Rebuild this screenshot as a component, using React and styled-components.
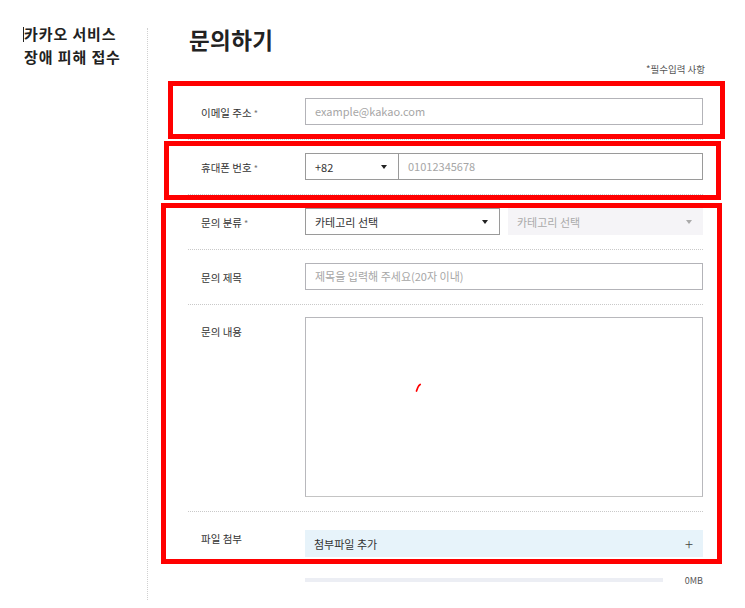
import React from "react";
import styled, { createGlobalStyle } from "styled-components";

const Global = createGlobalStyle`
  html, body { margin: 0; padding: 0; background: #fff; }
  body { font-family: "Noto Sans CJK KR", "Noto Sans", sans-serif; color: #333; }
  * { box-sizing: border-box; }
`;

const Page = styled.div`
  position: relative;
  display: flex;
  width: 745px;
  min-height: 608px;
`;

const Sidebar = styled.aside`
  width: 148px;
  flex: none;
  padding: 0 0 0 24px;
  border-right: 1px dotted #d0d0d0;
  margin-top: 28px;
  margin-bottom: 8px;
`;

const SideTitle = styled.h2`
  margin: -6px 0 0;
  font-size: 15px;
  line-height: 23px;
  font-weight: 700;
  color: #222;
  letter-spacing: 0.9px;
`;

const Caret = styled.span`
  display: inline-block;
  width: 1px;
  height: 15px;
  background: #222;
  vertical-align: -2px;
  margin-left: -1px;
`;

const Main = styled.main`
  width: 517px;
  margin-left: 40px;
  padding-top: 24px;
`;

const Title = styled.h1`
  margin: 0 0 0 1px;
  font-size: 22.5px;
  line-height: 30px;
  font-weight: 700;
  color: #222;
  letter-spacing: 0.4px;
`;

const Note = styled.div`
  margin-top: 8px;
  text-align: right;
  font-size: 9.5px;
  line-height: 14px;
  color: #555;
`;

const Form = styled.div`
  margin-top: 8px;
  width: 515px;
`;

const Row = styled.div`
  display: grid;
  grid-template-columns: 117px 398px;
  align-items: start;
  padding: ${(p) => p.$pad || "13px 0 14px"};
  border-top: 1px dotted #c9c9c9;
`;

const Label = styled.div`
  padding-left: 13px;
  padding-top: ${(p) => (p.$file ? "0" : "2px")};
  height: ${(p) => (p.$file ? "18px" : "27px")};
  font-size: 10.5px;
  line-height: ${(p) => (p.$file ? "18px" : "25px")};
  color: #333;
  white-space: nowrap;
`;

const Req = styled.span`
  color: #777;
  margin-left: 2px;
  font-size: 9px;
  line-height: 0;
`;

const Input = styled.div`
  height: 27px;
  border: 1px solid ${(p) => (p.$dark ? "#9a9a9a" : "#b3b3b8")};
  background: #fff;
  padding-left: 9px;
  font-size: 11px;
  line-height: 25px;
  color: ${(p) => (p.$value ? "#333" : "#a6a6a6")};
  flex: 1;
  white-space: nowrap;
`;

const Pair = styled.div`
  display: flex;
  gap: ${(p) => p.$gap || 0}px;
`;

const Select = styled.div`
  width: ${(p) => p.$w}px;
  flex: none;
  height: 27px;
  display: flex;
  align-items: center;
  justify-content: space-between;
  padding: 0 11px 0 9px;
  font-size: 11px;
  color: ${(p) => (p.$disabled ? "#aaa" : "#333")};
  border: ${(p) => (p.$disabled ? "none" : "1px solid #9a9a9a")};
  border-right: ${(p) => (p.$joined ? "none" : p.$disabled ? "none" : "1px solid #9a9a9a")};
  background: ${(p) => (p.$disabled ? "#f5f4f7" : "#fff")};
`;

const Arrow = styled.span`
  width: 0;
  height: 0;
  border-left: 3px solid transparent;
  border-right: 3px solid transparent;
  border-top: 4px solid ${(p) => (p.$disabled ? "#aaa" : "#222")};
`;

const TextArea = styled.div`
  position: relative;
  height: 180px;
  border: 1px solid #b8b8bc;
  border-bottom-color: #c4c4c4;
  background: #fff;
`;

const Mark = styled.svg`
  position: absolute;
  left: 109px;
  top: 64px;
`;

const FileBox = styled.div`
  height: 27px;
  display: flex;
  align-items: center;
  justify-content: space-between;
  padding: 0 10px 0 9px;
  background: #e7f3fa;
  font-size: 11px;
  color: #333;
`;

const Plus = styled.span`
  font-size: 15px;
  font-weight: 300;
  color: #444;
  line-height: 1;
`;

const SizeRow = styled.div`
  display: grid;
  grid-template-columns: 117px 358px 40px;
  align-items: center;
  margin-top: 16px;
  height: 14px;
`;

const Bar = styled.div`
  grid-column: 2;
  height: 4px;
  background: #eceef4;
`;

const Size = styled.div`
  text-align: right;
  font-size: 9px;
  color: #555;
`;

const RedBox = styled.div`
  position: absolute;
  left: ${(p) => p.$x}px;
  top: ${(p) => p.$y}px;
  width: ${(p) => p.$w}px;
  height: ${(p) => p.$h}px;
  border: 5px solid #ff0000;
  pointer-events: none;
`;

export default function App() {
  return (
    <>
      <Global />
      <Page>
        <Sidebar>
          <SideTitle>
            <Caret />카카오 서비스
            <br />
            장애 피해 접수
          </SideTitle>
        </Sidebar>
        <Main>
          <Title>문의하기</Title>
          <Note>*필수입력 사항</Note>
          <Form>
            <Row>
              <Label>
                이메일 주소<Req>*</Req>
              </Label>
              <Input>example@kakao.com</Input>
            </Row>
            <Row>
              <Label>
                휴대폰 번호<Req>*</Req>
              </Label>
              <Pair>
                <Select $w={93} $joined>
                  +82 <Arrow />
                </Select>
                <Input $dark>01012345678</Input>
              </Pair>
            </Row>
            <Row>
              <Label>
                문의 분류<Req>*</Req>
              </Label>
              <Pair $gap={8}>
                <Select $w={195}>
                  카테고리 선택 <Arrow />
                </Select>
                <Select $w={195} $disabled>
                  카테고리 선택 <Arrow $disabled />
                </Select>
              </Pair>
            </Row>
            <Row>
              <Label>문의 제목</Label>
              <Input>제목을 입력해 주세요(20자 이내)</Input>
            </Row>
            <Row $pad="12px 0 14px">
              <Label>문의 내용</Label>
              <TextArea>
                <Mark width="8" height="10" viewBox="0 0 8 10">
                  <path d="M1.5 9 L2.8 5.5 Q3.8 3.3 5.2 2.5" stroke="#ff0000" strokeWidth="1.7" fill="none" strokeLinecap="round" />
                </Mark>
              </TextArea>
            </Row>
            <Row $pad="18px 0 0">
              <Label $file>파일 첨부</Label>
              <FileBox>
                첨부파일 추가 <Plus>+</Plus>
              </FileBox>
            </Row>
            <SizeRow>
              <Bar />
              <Size>0MB</Size>
            </SizeRow>
          </Form>
        </Main>
        <RedBox $x={168} $y={81} $w={557} $h={58} />
        <RedBox $x={164} $y={141} $w={557} $h={59} />
        <RedBox $x={161} $y={203} $w={561} $h={361} />
      </Page>
    </>
  );
}
